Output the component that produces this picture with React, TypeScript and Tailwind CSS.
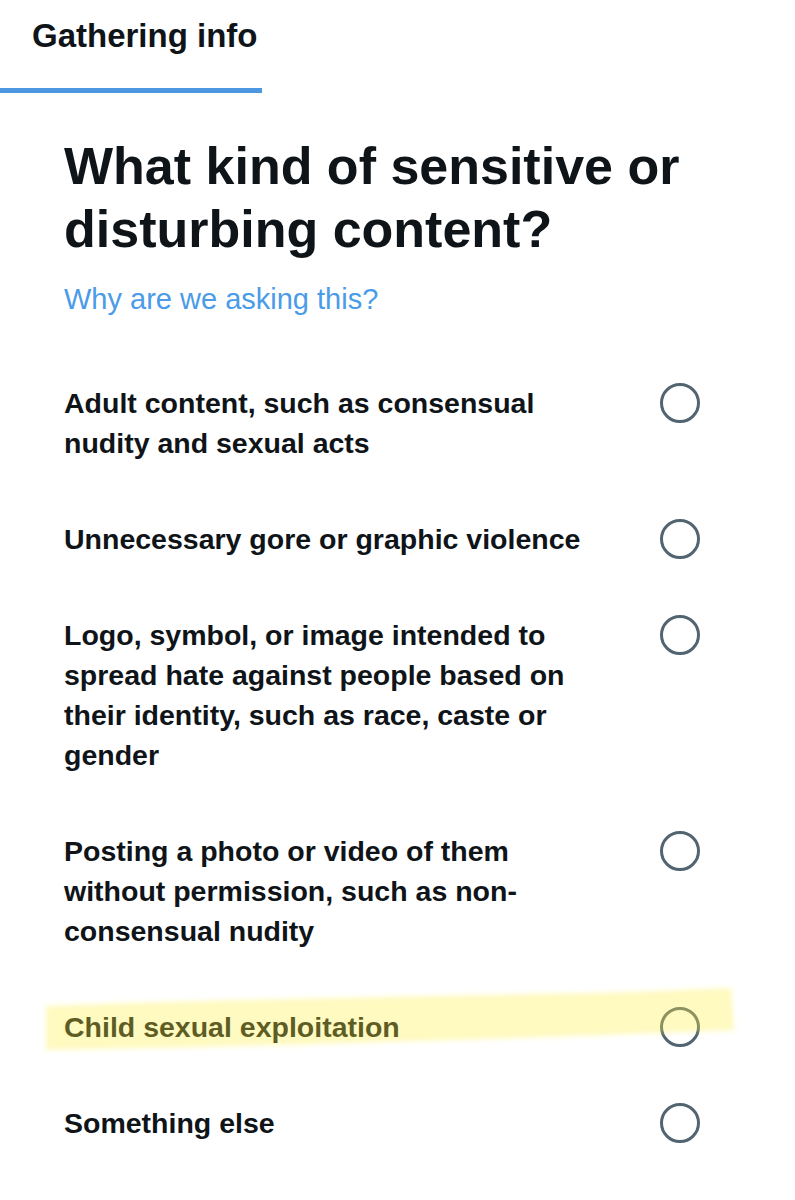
import React from 'react';

interface Option {
  id: string;
  lines: string[];
}

const options: Option[] = [
  { id: 'adult', lines: ['Adult content, such as consensual', 'nudity and sexual acts'] },
  { id: 'gore', lines: ['Unnecessary gore or graphic violence'] },
  {
    id: 'hate',
    lines: [
      'Logo, symbol, or image intended to',
      'spread hate against people based on',
      'their identity, such as race, caste or',
      'gender',
    ],
  },
  {
    id: 'photo',
    lines: ['Posting a photo or video of them', 'without permission, such as non-', 'consensual nudity'],
  },
  { id: 'child', lines: ['Child sexual exploitation'] },
  { id: 'else', lines: ['Something else'] },
];

const Highlight = () => (
  <svg
    className="pointer-events-none absolute left-0 top-[975px]"
    width="795"
    height="90"
    viewBox="0 975 795 90"
  >
    <defs>
      <filter id="marker-blur" x="-5%" y="-30%" width="110%" height="160%">
        <feGaussianBlur stdDeviation="2.5" />
      </filter>
    </defs>
    <path
      d="M46 1006 C 200 1000, 420 996, 600 993 C 660 991, 700 989, 731 988 L 734 1030 C 650 1034, 400 1042, 200 1047 L 46 1050 Z"
      fill="#fff03c"
      fillOpacity="0.33"
      filter="url(#marker-blur)"
    />
  </svg>
);

const App = () => {
  return (
    <div className="relative min-h-[1200px] w-[795px] bg-white text-[#0f1419] font-['Liberation_Sans',Arial,sans-serif]">
      <div className="w-[262px]">
        <div className="pl-8 pt-4 pb-8 text-[33px] font-bold leading-[40px]">Gathering info</div>
        <div className="h-[5px] bg-[#4d96e0]" />
      </div>

      <div className="pl-16 pr-10">
        <h1 className="mt-[42px] text-[52px] font-bold leading-[63px]">
          What kind of sensitive or
          <br />
          disturbing content?
        </h1>
        <div className="mt-5 text-[29px] leading-[36px] text-[#4a9be8]">Why are we asking this?</div>

        <div className="mt-[38px] pr-[55px]">
          {options.map((opt) => (
            <div key={opt.id} className="flex items-start justify-between gap-6 py-7">
              <div className="text-[28.5px] font-bold leading-[40px]">
                {opt.lines.map((line, i) => (
                  <React.Fragment key={i}>
                    {i > 0 && <br />}
                    {line}
                  </React.Fragment>
                ))}
              </div>
              <div className="h-10 w-10 shrink-0 rounded-full border-[3px] border-[#536471]" />
            </div>
          ))}
        </div>
      </div>

      <Highlight />
    </div>
  );
};

export default App;
